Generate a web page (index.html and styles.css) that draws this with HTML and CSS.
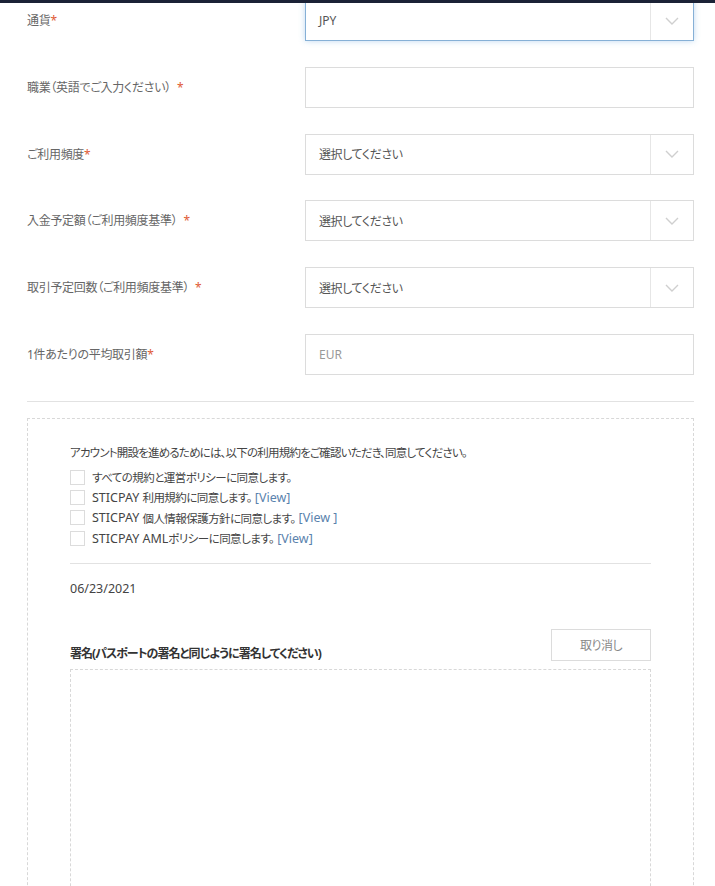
FILE: index.html
```html
<!DOCTYPE html>
<html lang="ja">
<head>
<meta charset="utf-8">
<link rel="stylesheet" href="styles.css">
</head>
<body>
<div class="topbar"></div>
<main class="page">
  <div class="row">
    <label class="lbl">通貨<span class="req">*</span></label>
    <div class="field select focus"><span class="val">JPY</span><span class="arrow"><svg width="14" height="8" viewBox="0 0 14 8"><path d="M1 1l6 6 6-6" fill="none" stroke="#cfcfcf" stroke-width="1.4"/></svg></span></div>
  </div>
  <div class="row">
    <label class="lbl">職業（英語でご入力ください）<span class="req sp">*</span></label>
    <div class="field"></div>
  </div>
  <div class="row">
    <label class="lbl">ご利用頻度<span class="req">*</span></label>
    <div class="field select"><span class="val"><span class="ja">選択してください</span></span><span class="arrow"><svg width="14" height="8" viewBox="0 0 14 8"><path d="M1 1l6 6 6-6" fill="none" stroke="#cfcfcf" stroke-width="1.4"/></svg></span></div>
  </div>
  <div class="row">
    <label class="lbl">入金予定額（ご利用頻度基準）<span class="req sp">*</span></label>
    <div class="field select"><span class="val"><span class="ja">選択してください</span></span><span class="arrow"><svg width="14" height="8" viewBox="0 0 14 8"><path d="M1 1l6 6 6-6" fill="none" stroke="#cfcfcf" stroke-width="1.4"/></svg></span></div>
  </div>
  <div class="row">
    <label class="lbl">取引予定回数（ご利用頻度基準）<span class="req sp">*</span></label>
    <div class="field select"><span class="val"><span class="ja">選択してください</span></span><span class="arrow"><svg width="14" height="8" viewBox="0 0 14 8"><path d="M1 1l6 6 6-6" fill="none" stroke="#cfcfcf" stroke-width="1.4"/></svg></span></div>
  </div>
  <div class="row last">
    <label class="lbl">1件あたりの平均取引額<span class="req">*</span></label>
    <div class="field"><span class="val ph">EUR</span></div>
  </div>
  <hr class="sep">
  <section class="terms">
    <p class="intro">アカウント開設を進めるためには、以下の利用規約をご確認いただき、同意してください。</p>
    <ul class="checks">
      <li><span class="cb"></span><span class="ja">すべての規約と運営ポリシーに同意します。</span></li>
      <li><span class="cb"></span>STICPAY&nbsp;<span class="ja">利用規約に同意します。</span><a class="link">[View]</a></li>
      <li><span class="cb"></span>STICPAY&nbsp;<span class="ja">個人情報保護方針に同意します。</span><a class="link">[View ]</a></li>
      <li><span class="cb"></span>STICPAY AML<span class="ja">ポリシーに同意します。</span><a class="link">[View]</a></li>
    </ul>
    <hr class="inner-sep">
    <p class="date">06/23/2021</p>
    <div class="sig-head">
      <span class="sig-lbl">署名(パスポートの署名と同じように署名してください)</span>
      <button class="cancel">取り消し</button>
    </div>
    <div class="sig-box"></div>
  </section>
</main>
</body>
</html>
```
FILE: styles.css
```css
html, body {
  margin: 0;
  padding: 0;
  background: #fff;
}
body {
  font-family: "Noto Sans", "Noto Sans CJK JP", sans-serif;
  font-size: 12px;
  color: #555;
  font-feature-settings: "palt";
  overflow: hidden;
}
.topbar {
  position: absolute;
  top: 0;
  left: 0;
  right: 0;
  height: 3px;
  background: #1b2236;
  z-index: 5;
}
.page {
  padding-left: 27px;
  width: 667px;
}
.row {
  display: flex;
  align-items: center;
  height: 41px;
  margin-bottom: 25.8px;
}
.row.last { margin-bottom: 0; }
.lbl {
  width: 278px;
  flex: none;
  color: #666;
  font-size: 12px;
  letter-spacing: -0.3px;
  margin-top: -1px;
}
.req {
  color: #e05a35;
}
.req.sp { margin-left: 6px; }
.field {
  flex: 1;
  height: 41px;
  box-sizing: border-box;
  border: 1px solid #dcdcdc;
  display: flex;
  align-items: center;
  background: #fff;
}
.field.focus {
  border-color: #86b0d6;
  box-shadow: 0 0 6px rgba(110, 170, 225, 0.45);
}
.val {
  flex: 1;
  padding-left: 13px;
  color: #555;
  font-size: 12px;
}
.val .ja {
  letter-spacing: -0.4px;
}
.val.ph { color: #999; }
.arrow {
  width: 42px;
  align-self: stretch;
  border-left: 1px solid #e6e6e6;
  display: flex;
  align-items: center;
  justify-content: center;
}
.sep {
  border: 0;
  border-top: 1px solid #e2e2e2;
  margin: 26px 0 16px;
  height: 0;
}
.terms {
  border: 1px dashed #d8d8d8;
  padding: 25px 42px 0 42px;
  height: 520px;
}
.intro {
  margin: 0;
  line-height: 18px;
  color: #444;
  font-size: 11.5px;
  letter-spacing: -0.8px;
}
.checks {
  list-style: none;
  margin: 5px 0 0;
  padding: 0;
}
.checks li {
  display: flex;
  align-items: center;
  height: 20.3px;
  color: #444;
  font-size: 12.5px;
  white-space: pre;
}
.checks .ja {
  font-size: 11.5px;
  letter-spacing: -0.55px;
}
.cb {
  width: 15px;
  height: 15px;
  box-sizing: border-box;
  border: 1px solid #dcdcdc;
  margin-right: 7px;
  flex: none;
}
.link {
  color: #5a82ad;
  margin-left: 3px;
}
.inner-sep {
  border: 0;
  border-top: 1px solid #e2e2e2;
  margin: 15px 0 0;
  height: 0;
}
.date {
  margin: 16px 0 0;
  line-height: 18px;
  font-size: 12.5px;
  color: #444;
}
.sig-head {
  display: flex;
  justify-content: space-between;
  align-items: flex-end;
  margin-top: 31px;
}
.sig-lbl {
  font-size: 12px;
  font-weight: 700;
  color: #333;
  line-height: 18px;
  letter-spacing: -1px;
}
.cancel {
  width: 100px;
  height: 32px;
  margin-bottom: 2px;
  background: #fff;
  border: 1px solid #dcdcdc;
  color: #888;
  font-family: inherit;
  font-size: 12px;
  letter-spacing: -0.5px;
  font-feature-settings: "palt";
  padding: 0;
}
.sig-box {
  margin-top: 6px;
  height: 300px;
  border: 1px dashed #d8d8d8;
}
```
